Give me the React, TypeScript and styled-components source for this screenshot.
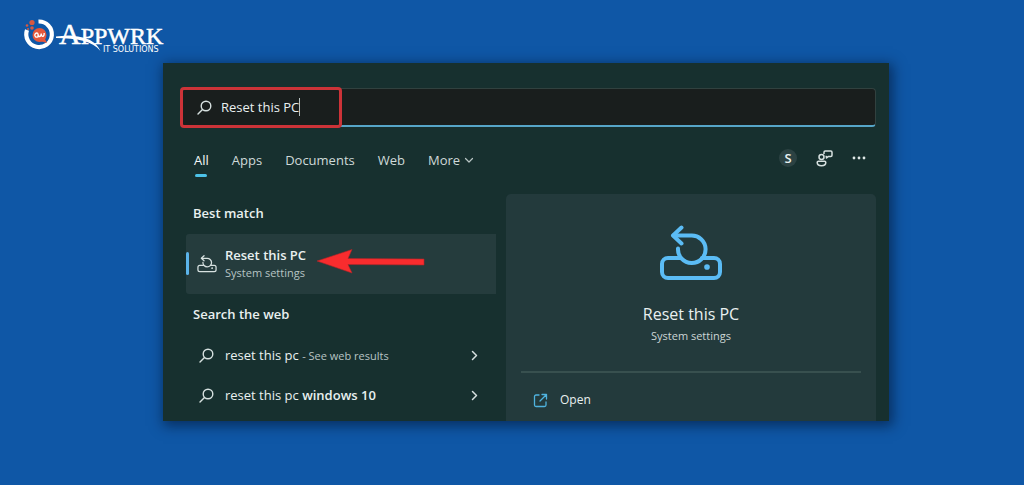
import React, { useState } from "react";
import styled, { createGlobalStyle } from "styled-components";

const GlobalStyle = createGlobalStyle`
  *, *::before, *::after { box-sizing: border-box; }
  body {
    margin: 0;
    background: #0f57a6;
    color: #e9f0f0;
    font-family: "Open Sans", "Noto Sans", sans-serif;
    font-size: 13px;
    line-height: 18px;
  }
  button, input { font: inherit; color: inherit; }
  h2, h3, p { margin: 0; }
`;

const Page = styled.div`
  padding: 13px 135px 64px 163px;
`;

const Header = styled.header`
  height: 50px;
  margin-left: -143px;
`;

const LogoLink = styled.a`
  display: inline-block;
  svg { display: block; }
`;

const SearchWindow = styled.main`
  padding: 25px 13px 0 17px;
  background: #17302f;
  box-shadow: 2px 3px 12px 2px rgba(4, 22, 52, 0.6);
`;

const SearchBar = styled.form`
  position: relative;
  display: flex;
  align-items: center;
  gap: 9px;
  height: 39px;
  padding: 0 16px;
  background: #191e1d;
  border: 1px solid #31413f;
  border-bottom: 2px solid #56a5c8;
  border-radius: 4px;
`;

const SearchInput = styled.input`
  field-sizing: content;
  padding: 0;
  height: 18px;
  background: none;
  border: 0;
  border-right: 1px solid #b9c2c1;
  outline: 0;
`;

const Highlight = styled.div`
  position: absolute;
  inset: -2px auto -3px -1px;
  width: 162px;
  border: 3px solid #cc3338;
  border-radius: 4px;
  pointer-events: none;
`;

const Toolbar = styled.div`
  display: flex;
  justify-content: space-between;
  padding: 20px 10px 0 14px;
`;

const Tabs = styled.nav`
  display: flex;
  gap: 23px;
`;

const Tab = styled.button<{ $active?: boolean }>`
  display: flex;
  flex-direction: column;
  align-items: center;
  height: 30px;
  padding: 4px 0 0;
  background: none;
  border: 0;
  color: ${(p) => (p.$active ? "#f4f8f8" : "#cfdad9")};

  &::after {
    content: "";
    width: 12px;
    height: 3px;
    margin-top: 5px;
    border-radius: 2px;
    background: ${(p) => (p.$active ? "#4cc2e8" : "transparent")};
  }
`;

const TabLabel = styled.span`
  display: flex;
  align-items: center;
  gap: 4px;
`;

const Actions = styled.div`
  display: flex;
  gap: 19px;
  height: 22px;
`;

const IconButton = styled.button`
  display: grid;
  place-items: center;
  padding: 0;
  background: none;
  border: 0;
`;

const Avatar = styled.span`
  display: grid;
  place-items: center;
  width: 18px;
  height: 18px;
  border-radius: 50%;
  background: #2c4243;
  font-weight: 600;
`;

const Columns = styled.div`
  display: grid;
  grid-template-columns: 31fr 37fr;
  gap: 10px;
  margin-top: 17px;
  padding-left: 6px;
`;

const Results = styled.section`
  display: flex;
  flex-direction: column;
`;

const Heading = styled.h2`
  padding: 10px 7px 12px;
  font-size: 13px;
  line-height: 18px;
  font-weight: 600;
`;

const BestMatch = styled.button`
  position: relative;
  display: flex;
  align-items: center;
  gap: 8px;
  height: 60px;
  margin-bottom: 1px;
  padding: 0 11px;
  text-align: left;
  background: #253c3d;
  border: 0;
  border-radius: 3px 0 0 3px;

  &::before {
    content: "";
    position: absolute;
    left: 0;
    top: 18px;
    width: 3px;
    height: 23px;
    border-radius: 2px;
    background: #5bb4ea;
  }
`;

const MatchText = styled.span`
  display: flex;
  flex-direction: column;
`;

const Strong = styled.strong`
  font-weight: 600;
`;

const Muted = styled.span`
  font-size: 11px;
  color: #b7c4c4;
`;

const Arrow = styled.svg`
  position: absolute;
  left: 129px;
  top: 13px;
`;

const WebResult = styled.button`
  display: flex;
  align-items: center;
  gap: 11px;
  height: 40px;
  padding: 0 17px 0 13px;
  background: none;
  border: 0;
  text-align: left;
`;

const WebText = styled.span`
  flex: 1;
`;

const Preview = styled.section`
  display: flex;
  flex-direction: column;
  align-items: center;
  padding: 31px 15px 0;
  background: #233a3c;
  border-radius: 5px 5px 0 0;
`;

const PreviewTitle = styled.h3`
  margin-top: 21px;
  font-size: 16px;
  line-height: 24px;
  font-weight: 400;
`;

const PreviewType = styled.p`
  margin-top: 1px;
  font-size: 11px;
  line-height: 18px;
  color: #ccd6d6;
`;

const OpenAction = styled.button`
  display: flex;
  align-items: center;
  gap: 12px;
  width: 100%;
  height: 50px;
  margin-top: 26px;
  padding: 6px 12px 0;
  background: none;
  border: 0;
  border-top: 2px solid #38504f;
  font-size: 12px;
`;

function Logo() {
  return (
    <svg width="150" height="44" viewBox="0 0 150 44" fill="none" aria-hidden="true">
      <path d="M18.500 8.500A12.800 12.800 0 1 1 7 17" stroke="#fff" strokeWidth="4.200" />
      <circle cx="19.500" cy="22" r="7" fill="#e4573b" />
      <path d="M20 28l7 2-2.500-5z" fill="#e4573b" />
      <path d="M18 20.500a2 2 0 1 0 0 3.200v-3.200c0 4 3 4 3.200 0c.2 4 3 4 3-.5" stroke="#fff" strokeWidth="1.300" />
      <circle cx="12" cy="9.500" r="2.600" fill="#d9583f" />
      <circle cx="7" cy="12.500" r="1.300" fill="#d9583f" />
      <circle cx="12" cy="15" r="1.800" fill="#d9583f" />
      <circle cx="8" cy="16" r="1" fill="#d9583f" />
      <g fill="#fff">
        <text x="39" y="31" fontFamily="'Liberation Serif', serif" fontSize="24" stroke="#fff" strokeWidth=".5">
          <tspan fontSize="30">A</tspan>PPWRK
        </text>
        <text x="83" y="39" fontSize="8" fontFamily="'DejaVu Sans', sans-serif">IT SOLUTIONS</text>
      </g>
      <path d="M36 23.500c16-2 38-1 44.500 14.500-8-10-24-13-44.500-13z" fill="#fff" />
    </svg>
  );
}

function SearchIcon() {
  return (
    <svg width="15" height="15" viewBox="0 0 15 15" fill="none" stroke="#d7e1e0" strokeWidth="1.400" strokeLinecap="round" aria-hidden="true">
      <circle cx="9" cy="6" r="4.800" />
      <path d="M5.500 9.500 1 14" />
    </svg>
  );
}

function ChevronDown() {
  return (
    <svg width="10" height="8" viewBox="0 0 10 8" fill="none" stroke="#b9c6c5" strokeWidth="1.200" strokeLinecap="round" strokeLinejoin="round" aria-hidden="true">
      <path d="M1.500 2.500 5 6l3.500-3.500" />
    </svg>
  );
}

function ChevronRight() {
  return (
    <svg width="9" height="11" viewBox="0 0 9 11" fill="none" stroke="#d7e1e0" strokeWidth="1.500" strokeLinecap="round" strokeLinejoin="round" aria-hidden="true">
      <path d="M2.500 1.500 6.500 5.500l-4 4" />
    </svg>
  );
}

function ResetIcon({ width, color, weight }: { width: number; color: string; weight: number }) {
  return (
    <svg width={width} height={(width * 56) / 64} viewBox="0 0 64 56" fill="none" stroke={color} strokeWidth={weight} strokeLinecap="round" strokeLinejoin="round" aria-hidden="true">
      <path d="M21 33H9a6 6 0 0 0-6 6v8a6 6 0 0 0 6 6h46a6 6 0 0 0 6-6v-8a6 6 0 0 0-6-6H43" />
      <path d="M14.500 10.500H32a13.800 13.800 0 1 1-13 13" />
      <path d="M22.500 2.500l-8.500 8 8.500 8" />
      <circle cx="48" cy="42" r="1.500" fill={color} strokeWidth={weight / 1.500} />
    </svg>
  );
}

function FeedbackIcon() {
  return (
    <svg width="17" height="17" viewBox="0 0 17 17" fill="none" stroke="#d7e1e0" strokeWidth="1.500" strokeLinejoin="round" aria-hidden="true">
      <circle cx="5.500" cy="7" r="2.500" />
      <path d="M2.500 11.200h6a1.300 1.300 0 0 1 1.300 1.300c0 2-1.800 3.200-4.300 3.200s-4.300-1.200-4.300-3.200a1.300 1.300 0 0 1 1.300-1.300z" />
      <path d="M8 4V2.200C8 1.500 8.500 1 9.200 1h5.600c.7 0 1.200.5 1.200 1.200v3c0 .7-.5 1.200-1.200 1.200h-2.300L10.500 8V6.400h-1" />
    </svg>
  );
}

function MoreIcon() {
  return (
    <svg width="14" height="4" viewBox="0 0 14 4" fill="#dfe8e7" aria-hidden="true">
      <circle cx="2" cy="2" r="1.400" />
      <circle cx="7" cy="2" r="1.400" />
      <circle cx="12" cy="2" r="1.400" />
    </svg>
  );
}

function OpenIcon() {
  return (
    <svg width="15" height="15" viewBox="0 0 15 15" fill="none" stroke="#4fb3df" strokeWidth="1.300" strokeLinecap="round" strokeLinejoin="round" aria-hidden="true">
      <path d="M6 2H3a1.500 1.500 0 0 0-1.500 1.500v8.500A1.500 1.500 0 0 0 3 13.500h8.500A1.500 1.500 0 0 0 13 12V9" />
      <path d="M9 1.500h4.500V6M13.300 1.700 7 8" />
    </svg>
  );
}

export default function App() {
  const [query, setQuery] = useState("Reset this PC");
  return (
    <>
      <GlobalStyle />
      <Page>
        <Header>
          <LogoLink href="#" aria-label="Appwrk IT Solutions">
            <Logo />
          </LogoLink>
        </Header>
        <SearchWindow>
          <SearchBar onSubmit={(e) => e.preventDefault()}>
            <SearchIcon />
            <SearchInput aria-label="Search" value={query} onChange={(e) => setQuery(e.target.value)} />
            <Highlight />
          </SearchBar>
          <Toolbar>
            <Tabs>
              <Tab $active>All</Tab>
              <Tab>Apps</Tab>
              <Tab>Documents</Tab>
              <Tab>Web</Tab>
              <Tab>
                <TabLabel>
                  More
                  <ChevronDown />
                </TabLabel>
              </Tab>
            </Tabs>
            <Actions>
              <IconButton aria-label="Account">
                <Avatar>S</Avatar>
              </IconButton>
              <IconButton aria-label="Feedback">
                <FeedbackIcon />
              </IconButton>
              <IconButton aria-label="Options">
                <MoreIcon />
              </IconButton>
            </Actions>
          </Toolbar>
          <Columns>
            <Results>
              <Heading>Best match</Heading>
              <BestMatch>
                <ResetIcon width={20} color="#d7e1e0" weight={4} />
                <MatchText>
                  <Strong>Reset this PC</Strong>
                  <Muted>System settings</Muted>
                </MatchText>
                <Arrow width="112" height="28" viewBox="0 0 112 28" aria-hidden="true">
                  <path d="M2 14 37 2.500 33 11.500 109 12v6L33 17.500 37 26z" fill="#f92c2e" stroke="#b32427" strokeWidth=".6" strokeLinejoin="round" />
                </Arrow>
              </BestMatch>
              <Heading>Search the web</Heading>
              <WebResult>
                <SearchIcon />
                <WebText>
                  reset this pc <Muted>- See web results</Muted>
                </WebText>
                <ChevronRight />
              </WebResult>
              <WebResult>
                <SearchIcon />
                <WebText>
                  reset this pc <Strong>windows 10</Strong>
                </WebText>
                <ChevronRight />
              </WebResult>
            </Results>
            <Preview>
              <ResetIcon width={64} color="#5bbcf5" weight={4} />
              <PreviewTitle>Reset this PC</PreviewTitle>
              <PreviewType>System settings</PreviewType>
              <OpenAction>
                <OpenIcon />
                Open
              </OpenAction>
            </Preview>
          </Columns>
        </SearchWindow>
      </Page>
    </>
  );
}
